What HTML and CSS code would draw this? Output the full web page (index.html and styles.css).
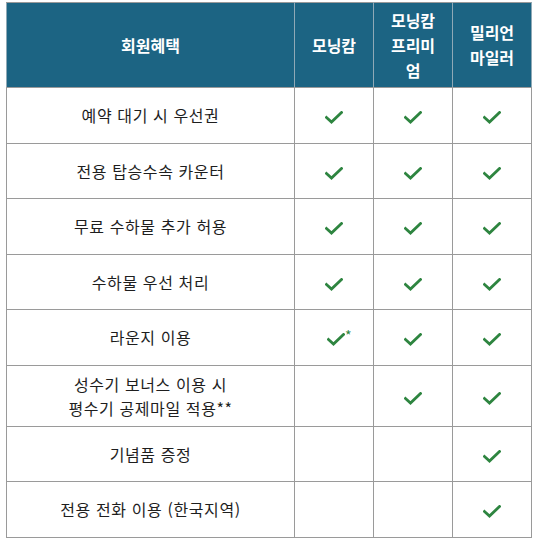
FILE: index.html
```html
<!DOCTYPE html>
<html lang="ko">
<head>
<meta charset="utf-8">
<link rel="stylesheet" href="styles.css">
</head>
<body>
<table class="benefits">
  <colgroup>
    <col class="c-name">
    <col class="c-tier">
    <col class="c-tier">
    <col class="c-tier">
  </colgroup>
  <thead>
    <tr class="head">
      <th>회원혜택</th>
      <th>모닝캄</th>
      <th>모닝캄<br>프리미<br>엄</th>
      <th>밀리언<br>마일러</th>
    </tr>
  </thead>
  <tbody>
    <tr class="r">
      <td class="name">예약 대기 시 우선권</td>
      <td><svg class="chk" viewBox="0 0 18 13"><path d="M1.5 6.5 L6.5 11 L16.5 1.5"/></svg></td>
      <td><svg class="chk" viewBox="0 0 18 13"><path d="M1.5 6.5 L6.5 11 L16.5 1.5"/></svg></td>
      <td><svg class="chk" viewBox="0 0 18 13"><path d="M1.5 6.5 L6.5 11 L16.5 1.5"/></svg></td>
    </tr>
    <tr class="r">
      <td class="name">전용 탑승수속 카운터</td>
      <td><svg class="chk" viewBox="0 0 18 13"><path d="M1.5 6.5 L6.5 11 L16.5 1.5"/></svg></td>
      <td><svg class="chk" viewBox="0 0 18 13"><path d="M1.5 6.5 L6.5 11 L16.5 1.5"/></svg></td>
      <td><svg class="chk" viewBox="0 0 18 13"><path d="M1.5 6.5 L6.5 11 L16.5 1.5"/></svg></td>
    </tr>
    <tr class="r">
      <td class="name">무료 수하물 추가 허용</td>
      <td><svg class="chk" viewBox="0 0 18 13"><path d="M1.5 6.5 L6.5 11 L16.5 1.5"/></svg></td>
      <td><svg class="chk" viewBox="0 0 18 13"><path d="M1.5 6.5 L6.5 11 L16.5 1.5"/></svg></td>
      <td><svg class="chk" viewBox="0 0 18 13"><path d="M1.5 6.5 L6.5 11 L16.5 1.5"/></svg></td>
    </tr>
    <tr class="r">
      <td class="name">수하물 우선 처리</td>
      <td><svg class="chk" viewBox="0 0 18 13"><path d="M1.5 6.5 L6.5 11 L16.5 1.5"/></svg></td>
      <td><svg class="chk" viewBox="0 0 18 13"><path d="M1.5 6.5 L6.5 11 L16.5 1.5"/></svg></td>
      <td><svg class="chk" viewBox="0 0 18 13"><path d="M1.5 6.5 L6.5 11 L16.5 1.5"/></svg></td>
    </tr>
    <tr class="r">
      <td class="name">라운지 이용</td>
      <td><span class="mark"><svg class="chk" viewBox="0 0 18 13"><path d="M1.5 6.5 L6.5 11 L16.5 1.5"/></svg><span class="ast">*</span></span></td>
      <td><svg class="chk" viewBox="0 0 18 13"><path d="M1.5 6.5 L6.5 11 L16.5 1.5"/></svg></td>
      <td><svg class="chk" viewBox="0 0 18 13"><path d="M1.5 6.5 L6.5 11 L16.5 1.5"/></svg></td>
    </tr>
    <tr class="r tall">
      <td class="name">성수기 보너스 이용 시<br>평수기 공제마일 적용**</td>
      <td></td>
      <td><svg class="chk" viewBox="0 0 18 13"><path d="M1.5 6.5 L6.5 11 L16.5 1.5"/></svg></td>
      <td><svg class="chk" viewBox="0 0 18 13"><path d="M1.5 6.5 L6.5 11 L16.5 1.5"/></svg></td>
    </tr>
    <tr class="r">
      <td class="name">기념품 증정</td>
      <td></td>
      <td></td>
      <td><svg class="chk" viewBox="0 0 18 13"><path d="M1.5 6.5 L6.5 11 L16.5 1.5"/></svg></td>
    </tr>
    <tr class="r">
      <td class="name">전용 전화 이용 (한국지역)</td>
      <td></td>
      <td></td>
      <td><svg class="chk" viewBox="0 0 18 13"><path d="M1.5 6.5 L6.5 11 L16.5 1.5"/></svg></td>
    </tr>
  </tbody>
</table>
</body>
</html>
```
FILE: styles.css
```css
html, body {
  margin: 0;
  background: #fff;
}
body {
  padding: 2px 0 0 6px;
  font-family: "Noto Sans CJK KR", "Noto Sans", sans-serif;
}
.benefits {
  border-collapse: collapse;
  width: 526px;
  table-layout: fixed;
}
.c-name { width: 288px; }
.c-tier { width: 79px; }
.benefits th,
.benefits td {
  border: 1px solid #9a9a9a;
  text-align: center;
  vertical-align: middle;
  padding: 0;
}
.benefits th {
  background: #1c6483;
  color: #fff;
  font-weight: 700;
  font-size: 16px;
  line-height: 25px;
  height: 84px;
  border-color: #9a9a9a #8fa9b6;
}
.benefits td {
  color: #1e1e1e;
  font-size: 16px;
  line-height: 24px;
}
.r td { height: 54.5px; }
.tall td { height: 60px; }
.name { letter-spacing: 0.6px; }
.chk {
  width: 18px;
  height: 13px;
  fill: none;
  stroke: #2e8540;
  stroke-width: 2.8;
  stroke-linecap: square;
  display: inline-block;
  vertical-align: middle;
}
.mark {
  display: inline-block;
  position: relative;
  left: 2px;
  line-height: 13px;
}
.ast {
  position: absolute;
  left: 18px;
  top: -2px;
  color: #2e8540;
  font-size: 14px;
  line-height: 12px;
}
```
